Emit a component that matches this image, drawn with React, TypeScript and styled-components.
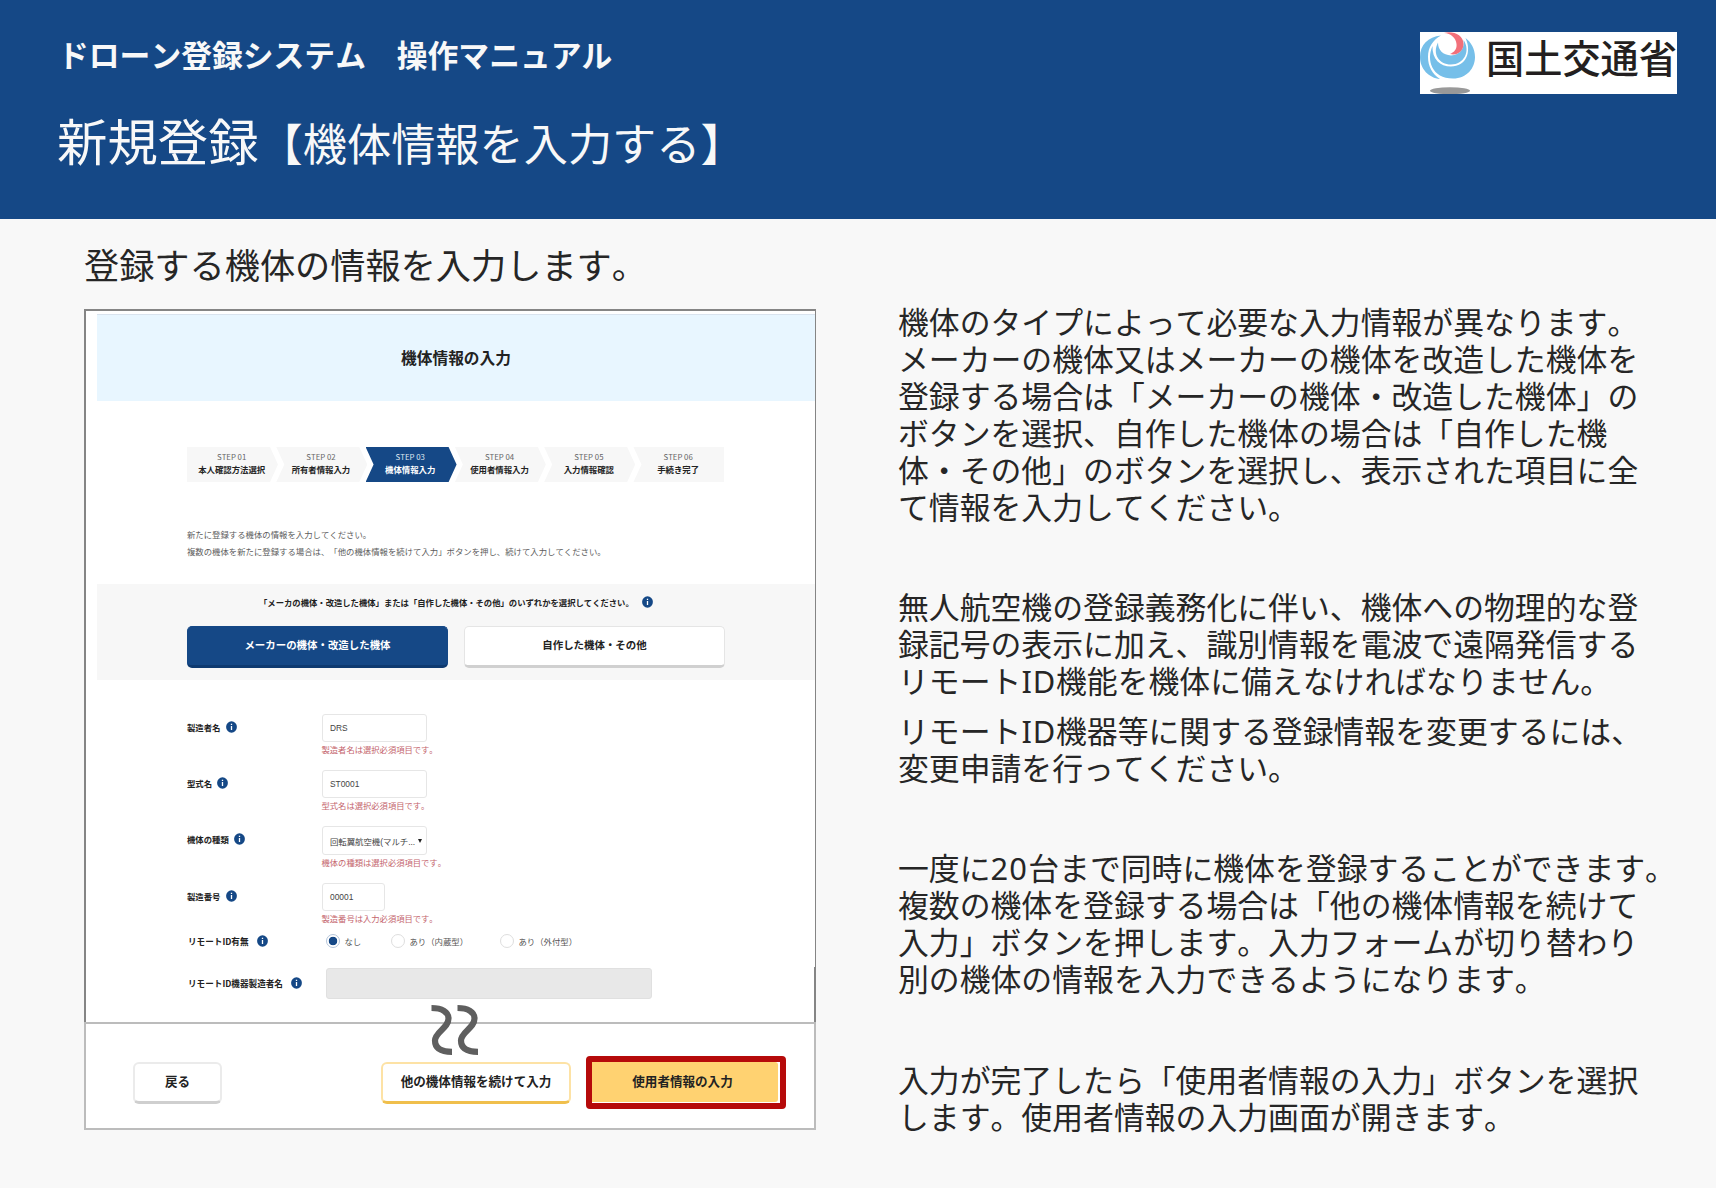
import React from "react";
import styled, { createGlobalStyle } from "styled-components";

const Global = createGlobalStyle`
  *{box-sizing:border-box}
  body{margin:0;background:#f8f8f8;color:#262626;font-family:"Noto Sans","Noto Sans CJK JP",sans-serif;}
  body,button{font-kerning:none;text-spacing-trim:space-all;}
`;
const jp = `"Noto Sans CJK JP","Noto Sans",sans-serif`;

const Slide = styled.div`width:1716px;height:1188px;background:#f8f8f8;overflow:hidden;font-kerning:none;`;
const Header = styled.header`
  height:219px;background:#154886;color:#f8f8f8;display:flex;justify-content:space-between;
  padding:32px 39px 0 57px;
`;
const Titles = styled.div`display:flex;flex-direction:column;margin-top:-2px;`;
const System = styled.div`margin-left:1px;font:700 30.8px/48px ${jp};font-kerning:none;white-space:pre;`;
const Title = styled.h1`
  margin:29px 0 0;font:400 50.4px/66px ${jp};font-kerning:none;white-space:nowrap;
  small{font-size:44.2px;}
`;
const Logo = styled.div`
  width:257px;height:62px;background:#fff;display:flex;align-items:flex-start;
  svg{display:block;flex:none;}
`;
const LogoText = styled.span`
  font:500 38.2px/56px ${jp};color:#231f20;white-space:nowrap;margin:-3px 0 0 10px;
`;
const Main = styled.main`display:flex;padding:25px 0 0 84px;`;
const Left = styled.section`width:732px;flex:none;`;
const Lead = styled.h2`margin:0;font:400 35.2px/40px ${jp};font-kerning:none;white-space:nowrap;`;
const Notes = styled.section`
  margin:60px 0 0 82px;flex:none;font-size:30.85px;line-height:37px;white-space:nowrap;
`;
const Para = styled.p<{ $gap: number }>`margin:0 0 ${p => p.$gap}px;span{display:block;}`;
const Latin = styled.b<{ $space: number }>`font-weight:400;letter-spacing:${p => p.$space}px;`;

const Shot = styled.div`
  margin-top:25px;width:732px;height:713px;border:solid #858585;border-width:2px 1px 0 2px;
  background:linear-gradient(#858585,#858585) right bottom/1px 55px no-repeat #fff;
  padding:3px 0 0 11px;font-family:${jp};color:#222;
`;
const Banner = styled.div`
  height:87px;background:#e8f6ff;border-top:1px solid #d9e3ee;display:flex;align-items:center;justify-content:center;
  padding-bottom:2px;font-size:15.7px;font-weight:600;
`;
const Steps = styled.ol`
  list-style:none;display:flex;margin:46px 0 0 90px;padding:0;width:537px;height:35px;
`;
const Step = styled.li<{ $active: boolean; $first: boolean; $last: boolean }>`
  flex:none;width:89.3px;height:35px;padding-top:4px;text-align:center;white-space:nowrap;
  display:flex;flex-direction:column;align-items:center;position:relative;
  color:${p => (p.$active ? "#fff" : "#222")};
  &::before{
    content:"";position:absolute;z-index:0;left:0;top:0;height:35px;width:91px;
    background:${p => (p.$active ? "#154886" : "#f7f7f7")};
    clip-path:polygon(0 0,${p => (p.$last ? "100% 0,100% 100%" : "83px 0,100% 50%,83px 100%")},0 100%,${p => (p.$first ? "0" : "8px")} 50%);
  }
  span{position:relative;font-size:7.8px;line-height:11px;color:${p => (p.$active ? "#dfe8f2" : "#666")};}
  b{position:relative;font-size:8.4px;line-height:14px;}
`;
const Intro = styled.p`margin:44px 0 0 90px;font-size:8.4px;line-height:16.5px;color:#5c5c5c;white-space:nowrap;`;
const Choice = styled.div`margin-top:24.6px;height:96px;background:#f7f7f7;padding:9px 0 0 90px;`;
const Question = styled.div`
  display:flex;align-items:center;gap:8.5px;height:18px;margin-left:72px;font-size:8.34px;font-weight:700;white-space:nowrap;
`;
const ChoiceRow = styled.div`display:flex;gap:16px;margin-top:15px;`;
const ChoiceButton = styled.button<{ $on?: boolean }>`
  width:261px;height:42px;padding:0 0 1px;border-radius:5px;font:700 10.45px/20px ${jp};
  color:${p => (p.$on ? "#fff" : "#222")};background:${p => (p.$on ? "#154886" : "#fff")};
  border:1.5px solid ${p => (p.$on ? "#154886" : "#e5e5e5")};
  border-bottom:3px solid ${p => (p.$on ? "#0e3a70" : "#d0d0d0")};
`;
const Form = styled.div`padding:34px 0 0 90px;`;
const Field = styled.div<{ $h: number }>`display:flex;height:${p => p.$h}px;align-items:flex-start;`;
const Label = styled.div<{ $line: number; $w: number; $remote?: boolean }>`
  width:${p => p.$w}px;flex:none;height:${p => p.$line}px;display:flex;align-items:center;gap:${p => (p.$remote ? 8 : 5)}px;
  padding-left:${p => (p.$remote ? 1 : 0)}px;
  font-size:${p => (p.$remote ? 8.6 : 8.4)}px;font-weight:700;white-space:nowrap;
`;
const Control = styled.div`display:flex;flex-direction:column;`;
const Input = styled.div<{ $w: number }>`
  width:${p => p.$w}px;height:28.5px;border:1px solid #e6e6e6;border-radius:3px;padding:0 4px 0 7.5px;
  display:flex;align-items:center;justify-content:space-between;white-space:nowrap;
  font:8.4px "Liberation Sans","Noto Sans CJK JP",sans-serif;color:#444;
`;
const Caret = styled.i`border:2.5px solid transparent;border-top:4px solid #222;border-bottom:0;`;
const Err = styled.div`font-size:8.3px;line-height:15px;color:#c4646c;white-space:nowrap;`;
const Radios = styled.div`display:flex;height:17px;font-size:8.4px;color:#555;`;
const Radio = styled.label<{ $w: number }>`width:${p => p.$w}px;display:flex;align-items:center;gap:5px;white-space:nowrap;`;
const Dot = styled.i<{ $on?: boolean }>`
  width:14px;height:14px;border-radius:50%;border:1px solid ${p => (p.$on ? "#b5c5da" : "#dedede")};
  background:${p => (p.$on ? "radial-gradient(circle,#154886 0 4px,#fff 4.6px)" : "#fff")};
`;
const Disabled = styled.div`width:326px;height:31px;border-radius:3px;background:#e8e8e8;border:1px solid #e0e0e0;`;
const Footer = styled.div`
  position:relative;width:732px;height:108px;background:#fff;border:2px solid #bcbcbc;
  display:flex;align-items:flex-start;padding:32px 0 0 47px;
`;
const Wave = styled.svg`position:absolute;left:345px;top:-20px;`;
const ActionButton = styled.button<{ $w: number; $tone: "gray" | "gold" }>`
  width:${p => p.$w}px;height:42px;margin-top:5.5px;padding:0 0 2px;border-radius:6px;background:#fff;color:#222;
  font:600 12.55px/20px ${jp};white-space:nowrap;
  border:2px solid ${p => (p.$tone === "gold" ? "#fde2a5" : "#ebebeb")};
  border-bottom:3px solid ${p => (p.$tone === "gold" ? "#f0bf4c" : "#cfcfcf")};
`;
const Marked = styled.div`
  width:200px;height:53px;border:6.5px solid #b60a0a;border-radius:4px;margin-left:15px;background:#fff;display:flex;
`;
const NextButton = styled.button`
  width:186px;height:40px;border:0;padding:0 5px 3px 0;background:#ffd271;color:#222;font:600 12.55px/20px ${jp};border-radius:0 3px 3px 0;
`;
const Push = styled.div`width:159px;flex:none;`;

const Info = () => (
  <svg width="11" height="12" viewBox="0 0 11 12">
    <ellipse cx="5.5" cy="6" rx="5.4" ry="5.8" fill="#154886" />
    <path d="M5.5 5v4M5.5 2.8v1.3" stroke="#fff" strokeWidth="1.3" />
  </svg>
);

const steps = ["本人確認方法選択", "所有者情報入力", "機体情報入力", "使用者情報入力", "入力情報確認", "手続き完了"];
const fields = [
  { label: "製造者名", value: "DRS", w: 105, err: "製造者名は選択必須項目です。" },
  { label: "型式名", value: "ST0001", w: 105, err: "型式名は選択必須項目です。" },
  { label: "機体の種類", value: "回転翼航空機(マルチ...", w: 105, err: "機体の種類は選択必須項目です。", select: true },
  { label: "製造番号", value: "00001", w: 63, err: "製造番号は入力必須項目です。" },
];

const Lines = ({ gap, lines }: { gap: number; lines: React.ReactNode[] }) => (
  <Para $gap={gap}>{lines.map((l, i) => <span key={i}>{l}</span>)}</Para>
);

export default function App() {
  return (
    <Slide>
      <Global />
      <Header>
        <Titles>
          <System>ドローン登録システム　操作マニュアル</System>
          <Title>新規登録<small>【機体情報を入力する】</small></Title>
        </Titles>
        <Logo>
          <svg width="56" height="62" viewBox="0 0 56 62">
            <path d="M21 3.5C8 5 0 13 0 25c0 12 9 21 20 22C12 42 8 34 8 25 8 15 13 8 21 3.5Z" fill="#76bfe9" />
            <path d="M12.500 14C6 28 12 46.500 33 46.500 47 46.500 55 36 55 25 55 17 51 10 45.500 6 52 20 46 34.500 31 34.500 20 34.500 12 27 12.500 14Z" fill="#76bfe9" />
            <path d="M18 10.500C12 22 19 32.500 31 32.500 44 32.500 51 19 43.500 8 45 16 40 23 31 23.500 23 23 18 18 18 10.500Z" fill="#76bfe9" />
            <path d="M24 1C33-1.500 43.500 3 43.500 12 43.500 19 37 24 30 22 35 20 37 16.500 36.500 12 36 6 31 1.500 24 1Z" fill="#f2707a" />
            <ellipse cx="30" cy="58.700" rx="20" ry="3.500" fill="#999" />
          </svg>
          <LogoText>国土交通省</LogoText>
        </Logo>
      </Header>
      <Main>
        <Left>
          <Lead>登録する機体の情報を入力します。</Lead>
          <Shot>
            <Banner>機体情報の入力</Banner>
            <Steps>
              {steps.map((s, i) => (
                <Step key={s} $active={i === 2} $first={i === 0} $last={i === 5}>
                  <span>STEP 0{i + 1}</span>
                  <b>{s}</b>
                </Step>
              ))}
            </Steps>
            <Intro>
              新たに登録する機体の情報を入力してください。<br />
              複数の機体を新たに登録する場合は、「他の機体情報を続けて入力」ボタンを押し、続けて入力してください。
            </Intro>
            <Choice>
              <Question>「メーカの機体・改造した機体」または「自作した機体・その他」のいずれかを選択してください。<Info /></Question>
              <ChoiceRow>
                <ChoiceButton $on>メーカーの機体・改造した機体</ChoiceButton>
                <ChoiceButton>自作した機体・その他</ChoiceButton>
              </ChoiceRow>
            </Choice>
            <Form>
              {fields.map((f, i) => (
                <Field key={f.label} $h={i === 3 ? 49.4 : 56.4}>
                  <Label $line={26} $w={134.5}>{f.label}<Info /></Label>
                  <Control>
                    <Input $w={f.w}>{f.value}{f.select && <Caret />}</Input>
                    <Err>{f.err}</Err>
                  </Control>
                </Field>
              ))}
              <Field $h={35.6}>
                <Label $remote $line={17} $w={138.5}>リモートID有無<Info /></Label>
                <Radios>
                  <Radio $w={65}><Dot $on />なし</Radio>
                  <Radio $w={109}><Dot />あり（内蔵型）</Radio>
                  <Radio $w={109}><Dot />あり（外付型）</Radio>
                </Radios>
              </Field>
              <Field $h={31}>
                <Label $remote $line={30} $w={138.5}>リモートID機器製造者名<Info /></Label>
                <Disabled />
              </Field>
            </Form>
          </Shot>
          <Footer>
            <Wave width="50" height="54" viewBox="0 0 50 54">
              <g fill="none" stroke="#5f5f5f" strokeWidth="6.200">
                <path d="M.5 4C11 4 17.500 8 17.500 14.500 17.500 24 4 28 4 36.500 4 44 10 47.800 21 47.800" />
                <path d="M26.500 4C37 4 43.500 8 43.500 14.500 43.500 24 30 28 30 36.500 30 44 36 47.800 47 47.800" />
              </g>
            </Wave>
            <ActionButton $w={89} $tone="gray">戻る</ActionButton>
            <Push />
            <ActionButton $w={190} $tone="gold">他の機体情報を続けて入力</ActionButton>
            <Marked><NextButton>使用者情報の入力</NextButton></Marked>
          </Footer>
        </Left>
        <Notes>
          <Lines gap={63} lines={[
            "機体のタイプによって必要な入力情報が異なります。",
            "メーカーの機体又はメーカーの機体を改造した機体を",
            "登録する場合は「メーカーの機体・改造した機体」の",
            "ボタンを選択、自作した機体の場合は「自作した機",
            "体・その他」のボタンを選択し、表示された項目に全",
            "て情報を入力してください。",
          ]} />
          <Lines gap={13} lines={[
            "無人航空機の登録義務化に伴い、機体への物理的な登",
            "録記号の表示に加え、識別情報を電波で遠隔発信する",
            <>リモート<Latin $space={0.8}>ID</Latin>機能を機体に備えなければなりません。</>,
          ]} />
          <Lines gap={63} lines={[
            <>リモート<Latin $space={0.8}>ID</Latin>機器等に関する登録情報を変更するには、</>,
            "変更申請を行ってください。",
          ]} />
          <Lines gap={64} lines={[
            <>一度に<Latin $space={1.2}>20</Latin>台まで同時に機体を登録することができます。</>,
            "複数の機体を登録する場合は「他の機体情報を続けて",
            "入力」ボタンを押します。入力フォームが切り替わり",
            "別の機体の情報を入力できるようになります。",
          ]} />
          <Lines gap={0} lines={["入力が完了したら「使用者情報の入力」ボタンを選択", "します。使用者情報の入力画面が開きます。"]} />
        </Notes>
      </Main>
    </Slide>
  );
}
